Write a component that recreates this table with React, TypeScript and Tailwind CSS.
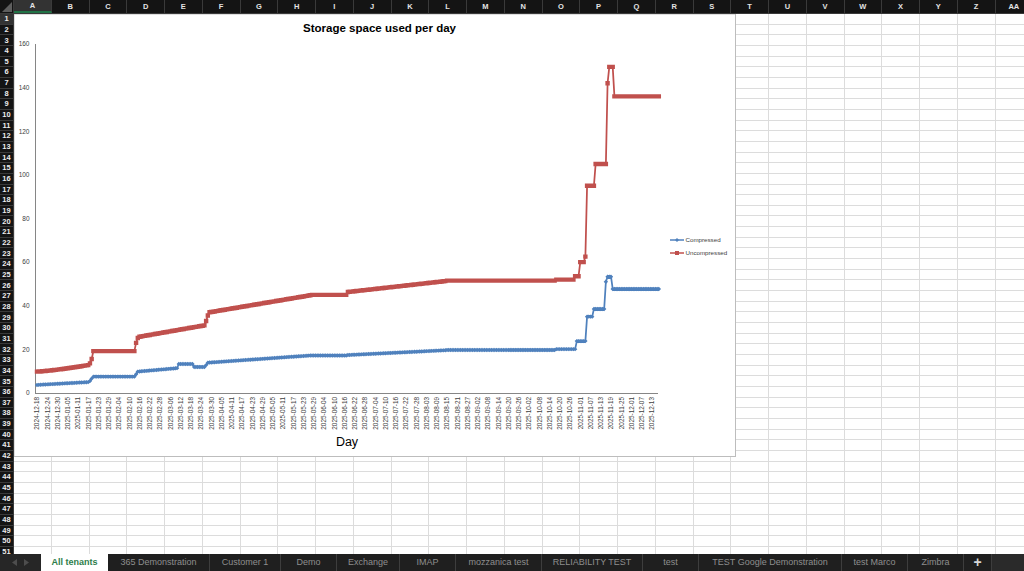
const COLS = ['A', 'B', 'C', 'D', 'E', 'F', 'G', 'H', 'I', 'J', 'K', 'L', 'M', 'N', 'O', 'P', 'Q', 'R', 'S', 'T', 'U', 'V', 'W', 'X', 'Y', 'Z', 'AA'];
const ROWS = Array.from({ length: 51 }, (_, i) => i + 1);

const TABS = [
  { name: 'All tenants', w: 'w-[67px]' },
  { name: '365 Demonstration', w: 'w-[102px]' },
  { name: 'Customer 1', w: 'w-[71px]' },
  { name: 'Demo', w: 'w-[56px]' },
  { name: 'Exchange', w: 'w-[63px]' },
  { name: 'IMAP', w: 'w-[56px]' },
  { name: 'mozzanica test', w: 'w-[86px]' },
  { name: 'RELIABILITY TEST', w: 'w-[101px]' },
  { name: 'test', w: 'w-[56px]' },
  { name: 'TEST Google Demonstration', w: 'w-[143px]' },
  { name: 'test Marco', w: 'w-[66px]' },
  { name: 'Zimbra', w: 'w-[56px]' }
];

// chart geometry, in page pixels
const X0 = 37;
const DX = 10.25 / 6;
const Y0 = 393;
const YS = 349 / 160;
const DAYS = 365;

const px = (d: number) => X0 + d * DX;
const py = (v: number) => Y0 - v * YS;

const uncompressed = (d: number): number => {
  if (d <= 30) return 9.8 + 3 * Math.pow(d / 30, 1.3);
  if (d === 31) return 13.6;
  if (d === 32) return 15.6;
  if (d <= 57) return 19.2;
  if (d === 58) return 23;
  if (d === 59) return 25.2;
  if (d <= 98) return 25.8 + (5.2 * (d - 60)) / 38;
  if (d === 99) return 33;
  if (d === 100) return 35.5;
  if (d <= 160) return 37 + (7.8 * (d - 101)) / 59;
  if (d <= 181) return 45;
  if (d <= 239) return 46.3 + (5 * (d - 182)) / 57;
  if (d <= 303) return 51.5;
  if (d <= 314) return 52;
  if (d <= 317) return 53.5;
  if (d <= 320) return 60;
  if (d === 321) return 62.5;
  if (d <= 326) return 95;
  if (d <= 333) return 105;
  if (d === 334) return 142;
  if (d <= 337) return 149.5;
  return 136;
};

const compressed = (d: number): number => {
  if (d <= 30) return 3.7 + (1.3 * d) / 30;
  if (d === 31) return 5.5;
  if (d === 32) return 6.6;
  if (d <= 57) return 7.5;
  if (d === 58) return 8.6;
  if (d <= 82) return 9.8 + (1.6 * (d - 59)) / 23;
  if (d <= 91) return 13.3;
  if (d <= 98) return 11.9;
  if (d === 99) return 12.8;
  if (d <= 160) return 13.9 + (3.3 * (d - 100)) / 60;
  if (d <= 181) return 17.2;
  if (d <= 239) return 17.4 + (2.2 * (d - 182)) / 57;
  if (d <= 303) return 19.7;
  if (d <= 315) return 20.1;
  if (d <= 321) return 23.8;
  if (d <= 325) return 35;
  if (d <= 332) return 38.5;
  if (d === 333) return 51;
  if (d <= 336) return 53.3;
  return 47.7;
};

const series = (fn: (d: number) => number) =>
  Array.from({ length: DAYS }, (_, d) => [px(d), py(fn(d))] as [number, number]);

const linePath = (pts: [number, number][]) =>
  pts.map(([x, y], i) => `${i ? 'L' : 'M'}${x.toFixed(2)} ${y.toFixed(2)}`).join(' ');

const squares = (pts: [number, number][], s: number) =>
  pts.map(([x, y]) => `M${(x - s / 2).toFixed(2)} ${(y - s / 2).toFixed(2)}h${s}v${s}h${-s}z`).join('');

const diamonds = (pts: [number, number][], r: number) =>
  pts.map(([x, y]) => `M${x.toFixed(2)} ${(y - r).toFixed(2)}l${r} ${r}l${-r} ${r}l${-r} ${-r}z`).join('');

const startDay = Date.UTC(2024, 11, 18);
const dateLabels = Array.from({ length: 61 }, (_, i) =>
  new Date(startDay + i * 6 * 86400000).toISOString().slice(0, 10)
);

const BLUE = '#4f81bd';
const RED = '#c0504d';

const StorageChart = () => {
  const red = series(uncompressed);
  const blue = series(compressed);

  return (
    <svg viewBox="14 14 722 443" width={722} height={443} className="block" style={{ fontFamily: '"Liberation Sans", Arial, sans-serif' }}>
      <rect x={14} y={14} width={721.5} height={442.5} fill="#fff" stroke="#bdbdbd" strokeWidth={1} />

      {/* title */}
      <text x={303} y={32} fontSize={11.5} fontWeight={700} fill="#000" textLength={153} lengthAdjust="spacingAndGlyphs">
        Storage space used per day
      </text>

      {/* value axis */}
      <line x1={35.5} y1={44} x2={35.5} y2={393.5} stroke="#868686" strokeWidth={1} />
      {[0, 20, 40, 60, 80, 100, 120, 140, 160].map((v) => (
        <text key={v} x={29.5} y={py(v) + 2.3} fontSize={6.5} textAnchor="end" fill="#404040">
          {v}
        </text>
      ))}

      {/* category axis */}
      <line x1={35} y1={393.5} x2={658} y2={393.5} stroke="#868686" strokeWidth={1} />
      {dateLabels.map((label, i) => {
        const x = X0 + i * 10.25 + 2.3;
        return (
          <text key={label} x={x} y={397} fontSize={6.4} textAnchor="end" fill="#404040" transform={`rotate(-90 ${x} 397)`}>
            {label}
          </text>
        );
      })}
      <text x={347} y={446} fontSize={12.5} textAnchor="middle" fill="#000">
        Day
      </text>

      {/* series */}
      <path d={linePath(red)} fill="none" stroke={RED} strokeWidth={1.75} strokeLinejoin="round" />
      <path d={squares(red, 4.4)} fill={RED} />
      <path d={linePath(blue)} fill="none" stroke={BLUE} strokeWidth={1.75} strokeLinejoin="round" />
      <path d={diamonds(blue, 2.2)} fill={BLUE} />

      {/* legend */}
      <line x1={670} y1={240} x2={684} y2={240} stroke={BLUE} strokeWidth={1.5} />
      <path d={diamonds([[677, 240]], 2)} fill={BLUE} />
      <text x={685.5} y={242.2} fontSize={6.2} fill="#404040">
        Compressed
      </text>
      <line x1={670} y1={253} x2={684} y2={253} stroke={RED} strokeWidth={1.5} />
      <path d={squares([[677, 253]], 4)} fill={RED} />
      <text x={685.5} y={255.2} fontSize={6.2} fill="#404040">
        Uncompressed
      </text>
    </svg>
  );
};

const App = () => {
  return (
    <div className="w-[1024px] h-[571px] overflow-hidden flex flex-col bg-white font-['Liberation_Sans',Arial,sans-serif]">
      {/* Column headers */}
      <div className="flex h-[14px] shrink-0 bg-[#141414] border-b border-[#3a3a3a]">
        <div className="w-[14px] shrink-0 border-r border-[#3a3a3a] flex items-end justify-end">
          <svg width="10" height="10" viewBox="0 0 10 10" className="mb-[1px] mr-[1px]">
            <polygon points="10,0 10,10 0,10" fill="#5e5e5e" />
          </svg>
        </div>
        {COLS.map((c) => (
          <div
            key={c}
            className={`w-[37.76px] shrink-0 border-r border-[#3a3a3a] flex items-center justify-center text-[7.5px] font-bold text-[#e4e4e4] ${
              c === 'A' ? 'bg-[#333333] border-b-2 border-b-[#217346]' : ''
            }`}
          >
            {c}
          </div>
        ))}
      </div>

      {/* Sheet body */}
      <div className="relative flex-1 overflow-hidden">
        {ROWS.map((r) => (
          <div key={r} className="flex h-[10.67px]">
            <div
              className={`w-[14px] shrink-0 border-b border-r border-[#3a3a3a] flex items-center justify-center text-[7.5px] font-bold text-[#ececec] ${
                r === 1 ? 'bg-[#333333]' : 'bg-[#141414]'
              }`}
            >
              {r}
            </div>
            {COLS.map((c) => (
              <div key={c} className="w-[37.76px] shrink-0 border-b border-r border-[#dcdcdc]" />
            ))}
          </div>
        ))}

        {/* chart object lying over the cells */}
        <div className="absolute left-[14px] top-0">
          <StorageChart />
        </div>
      </div>

      {/* Sheet tabs */}
      <div className="flex h-[17px] shrink-0 bg-[#1f1f1f] text-[9px] font-['Liberation_Sans',Arial,sans-serif]">
        <div className="w-[41px] shrink-0 bg-[#262626] flex items-center justify-center gap-[7px]">
          <svg width="5" height="7" viewBox="0 0 5 7">
            <polygon points="5,0 5,7 0,3.5" fill="#4d4d4d" />
          </svg>
          <svg width="5" height="7" viewBox="0 0 5 7">
            <polygon points="0,0 0,7 5,3.5" fill="#4d4d4d" />
          </svg>
        </div>
        {TABS.map((t, i) => (
          <div
            key={t.name}
            className={`${t.w} shrink-0 flex items-center justify-center whitespace-nowrap ${
              i === 0 ? 'bg-white text-[#2e7d4b] font-semibold' : 'text-[#8e8e8e] border-r border-[#3d3d3d]'
            }`}
          >
            {t.name}
          </div>
        ))}
        <div className="w-[28px] shrink-0 flex items-center justify-center text-[14px] font-bold text-[#d6d6d6] border-r border-[#3d3d3d]">
          +
        </div>
        <div className="flex-1 bg-[#2a2a2a]" />
      </div>
    </div>
  );
};

export default App;
